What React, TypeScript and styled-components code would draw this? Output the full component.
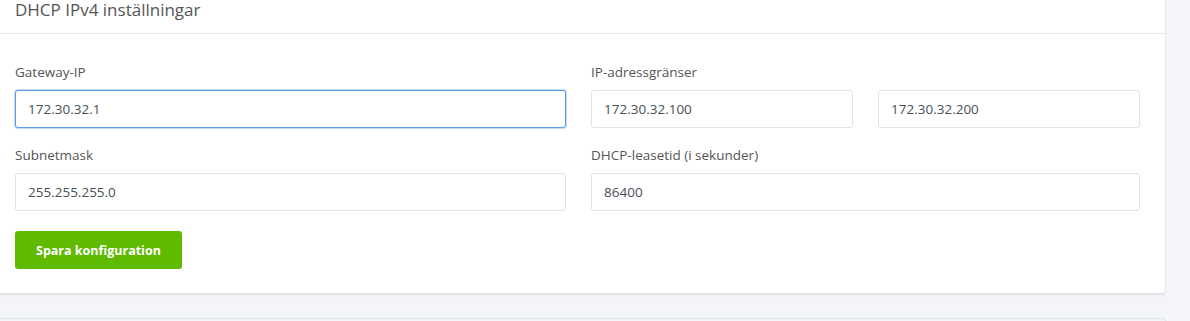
import styled, { createGlobalStyle } from 'styled-components';

const GlobalStyle = createGlobalStyle`
  body {
    margin: 0;
    background-color: #f4f5f9;
    font-family: 'Open Sans', 'Noto Sans', sans-serif;
  }
`;

type FieldProps = { label: string; value: string; focused?: boolean };

const Field = ({ label, value, focused }: FieldProps) => (
  <FieldWrap>
    <Label>{label}</Label>
    <Input defaultValue={value} $focused={focused} />
  </FieldWrap>
);

const App = () => {
  return (
    <>
      <GlobalStyle />
      <Page>
        <Card>
          <CardHeader>
            <Title>DHCP IPv4 inställningar</Title>
          </CardHeader>
          <CardBody>
            <FormGrid>
              <Field label='Gateway-IP' value='172.30.32.1' focused />
              <FieldWrap>
                <Label>IP-adressgränser</Label>
                <Pair>
                  <Input defaultValue='172.30.32.100' />
                  <Input defaultValue='172.30.32.200' />
                </Pair>
              </FieldWrap>
              <Field label='Subnetmask' value='255.255.255.0' />
              <Field label='DHCP-leasetid (i sekunder)' value='86400' />
            </FormGrid>
            <SaveButton type='button'>Spara konfiguration</SaveButton>
          </CardBody>
        </Card>
        <NextCard />
      </Page>
    </>
  );
};

const Page = styled.div`
  display: flex;
  flex-direction: column;
  gap: 24px;
  width: 1166px;
  height: 321px;
  overflow: hidden;
`;

const Card = styled.div`
  background-color: #fff;
  border-right: 1px solid #e4e7eb;
  border-bottom: 1px solid #e1e4e8;
  border-bottom-right-radius: 3px;
  box-shadow: 0 1px 2px rgba(0, 0, 0, 0.08);
`;

const CardHeader = styled.div`
  height: 34px;
  border-bottom: 1px solid #e3e7ec;
  padding: 0 15px;
  box-sizing: border-box;
`;

const Title = styled.h3`
  margin: 0;
  font-size: 17px;
  font-weight: 400;
  line-height: 19px;
  color: #555;
`;

const CardBody = styled.div`
  padding: 28px 25px 24px 15px;
  display: flex;
  flex-direction: column;
  align-items: flex-start;
  gap: 20px;
`;

const FormGrid = styled.div`
  display: grid;
  grid-template-columns: 551px 549px;
  column-gap: 25px;
  row-gap: 17px;
  width: 100%;
`;

const FieldWrap = styled.div`
  display: flex;
  flex-direction: column;
  gap: 8px;
`;

const Label = styled.label`
  font-size: 13.5px;
  line-height: 20px;
  color: #555;
`;

const Pair = styled.div`
  display: grid;
  grid-template-columns: 1fr 1fr;
  column-gap: 25px;
`;

const Input = styled.input<{ $focused?: boolean }>`
  height: 38px;
  box-sizing: border-box;
  width: 100%;
  padding: 0 12px;
  font-family: inherit;
  font-size: 13.5px;
  color: #495057;
  background: #fff;
  border: 1px solid ${p => (p.$focused ? '#5b9be6' : '#dfe3e8')};
  border-radius: 3px;
  outline: none;
  box-shadow: ${p => (p.$focused ? '0 0 0 1px rgba(91, 155, 230, 0.35)' : 'none')};
`;

const SaveButton = styled.button`
  height: 38px;
  padding: 0 21px;
  background-color: #5fba00;
  color: #fff;
  border: none;
  border-radius: 3px;
  font-family: inherit;
  font-size: 12.5px;
  font-weight: 700;
`;

const NextCard = styled.div`
  flex: 1;
  background-color: #f4f5f9;
  border-top: 1px solid #e1e4e8;
  border-right: 1px solid #e1e4e8;
  border-top-right-radius: 3px;
`;

export default App;
